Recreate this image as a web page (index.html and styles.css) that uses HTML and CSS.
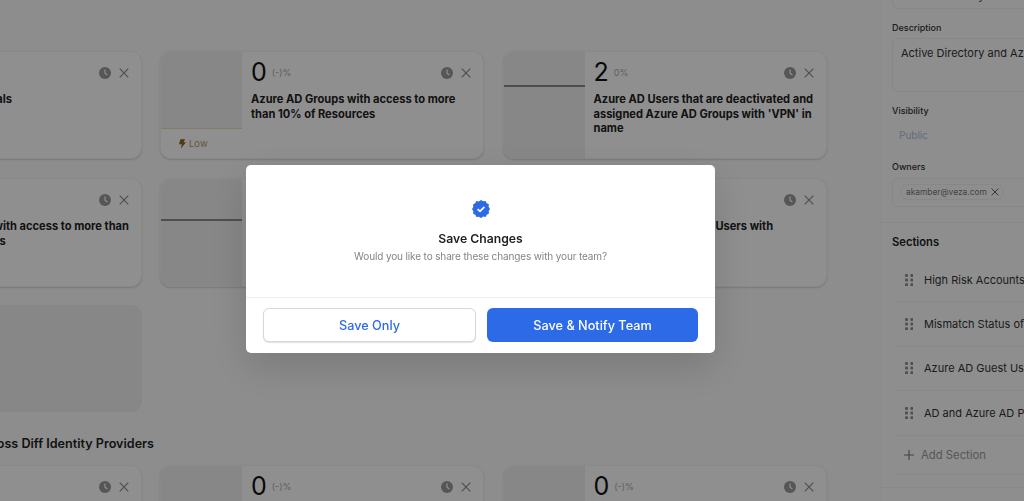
FILE: index.html
```html
<!DOCTYPE html>
<html lang="en">
<head>
<meta charset="utf-8">
<title>Save Changes</title>
<link rel="stylesheet" href="styles.css">
</head>
<body>
<svg class="defs" width="0" height="0" aria-hidden="true">
  <symbol id="clock" viewBox="0 0 12 12"><circle cx="6" cy="6" r="6" fill="currentColor"/><path d="M6 2.6V6.2L8.4 8" fill="none" stroke="#fff" stroke-width="1.2"/></symbol>
  <symbol id="close" viewBox="0 0 10 10"><path d="M.7.7 9.3 9.3M9.3.7.7 9.3" fill="none" stroke="currentColor" stroke-width="1.2"/></symbol>
  <symbol id="grip" viewBox="0 0 8 12"><g fill="currentColor"><rect width="3" height="3" rx="1"/><rect x="5.4" width="3" height="3" rx="1"/><rect y="4.6" width="3" height="3" rx="1"/><rect x="5.4" y="4.6" width="3" height="3" rx="1"/><rect y="9.2" width="3" height="3" rx="1"/><rect x="5.4" y="9.2" width="3" height="3" rx="1"/></g></symbol>
</svg>
<div class="page">
  <main class="board">
    <div class="cards row-a">
      <article class="card"><div class="chart"></div><div class="body"><div class="head"><span class="num">1</span><span class="tools"><svg class="clock"><use href="#clock"/></svg><svg class="close"><use href="#close"/></svg></span></div><h3>Shared Credentials</h3></div></article>
      <article class="card"><div class="chart chart-low"><div class="plot"></div><div class="level"><svg class="bolt" viewBox="0 0 8 11"><path d="M1.6 0H7L5.3 3.6H8L2 11 3.2 5.8H0Z" fill="currentColor"/></svg>Low</div></div><div class="body"><div class="head"><span class="num">0</span><span class="pct">(-)%</span><span class="tools"><svg class="clock"><use href="#clock"/></svg><svg class="close"><use href="#close"/></svg></span></div><h3>Azure AD Groups with access to more than 10% of Resources</h3></div></article>
      <article class="card"><div class="chart chart-line line-a"></div><div class="body"><div class="head"><span class="num">2</span><span class="pct">0%</span><span class="tools"><svg class="clock"><use href="#clock"/></svg><svg class="close"><use href="#close"/></svg></span></div><h3>Azure AD Users that are deactivated and assigned Azure AD Groups with 'VPN' in name</h3></div></article>
    </div>
    <div class="cards row-b">
      <article class="card"><div class="chart"></div><div class="body"><div class="head"><span class="num">4</span><span class="tools"><svg class="clock"><use href="#clock"/></svg><svg class="close"><use href="#close"/></svg></span></div><h3>Azure AD Apps with access to more than 10% of Resources</h3></div></article>
      <article class="card"><div class="chart chart-line line-b"></div><div class="body"></div></article>
      <article class="card"><div class="chart"></div><div class="body"><div class="head"><span class="num">0</span><span class="tools"><svg class="clock"><use href="#clock"/></svg><svg class="close"><use href="#close"/></svg></span></div><h3>Azure AD Deactivated Users with</h3></div></article>
    </div>
    <div class="cards row-c">
      <div class="placeholder"></div>
    </div>
    <div class="section-wrap"><h2 class="section-title">Mismatch Status of Users Across Diff Identity Providers</h2></div>
    <div class="cards row-d">
      <article class="card"><div class="chart"></div><div class="body"><div class="head"><span class="num">0</span><span class="tools"><svg class="clock"><use href="#clock"/></svg><svg class="close"><use href="#close"/></svg></span></div></div></article>
      <article class="card"><div class="chart"></div><div class="body"><div class="head"><span class="num">0</span><span class="pct">(-)%</span><span class="tools"><svg class="clock"><use href="#clock"/></svg><svg class="close"><use href="#close"/></svg></span></div></div></article>
      <article class="card"><div class="chart"></div><div class="body"><div class="head"><span class="num">0</span><span class="pct">(-)%</span><span class="tools"><svg class="clock"><use href="#clock"/></svg><svg class="close"><use href="#close"/></svg></span></div></div></article>
    </div>
  </main>

  <aside class="side">
    <div class="fields">
      <div class="box box-name">Active Directory and Azure AD</div>
      <div class="label">Description</div>
      <div class="box box-desc">Active Directory and Azure AD</div>
      <div class="label label-vis">Visibility</div>
      <div class="public">Public</div>
      <div class="label label-own">Owners</div>
      <div class="box box-owners"><span class="chip">akamber@veza.com<svg class="chip-x"><use href="#close"/></svg></span></div>
    </div>
    <section class="sections">
      <h2>Sections</h2>
      <div class="row"><svg class="grip"><use href="#grip"/></svg>High Risk Accounts and Groups</div>
      <div class="row"><svg class="grip"><use href="#grip"/></svg>Mismatch Status of Users Across</div>
      <div class="row"><svg class="grip"><use href="#grip"/></svg>Azure AD Guest Users and Groups</div>
      <div class="row"><svg class="grip"><use href="#grip"/></svg>AD and Azure AD Permissions</div>
      <div class="add"><svg class="plus" viewBox="0 0 10 10"><path d="M5 0V10M0 5H10" fill="none" stroke="currentColor" stroke-width="1.1"/></svg>Add Section</div>
    </section>
  </aside>
</div>

<div class="overlay">
  <div class="modal" role="dialog">
    <div class="modal-top">
      <svg class="badge" viewBox="0 0 18 18"><path d="M9 0l2.1 1.3 2.5-.3 1.1 2.2 2.2 1.1-.3 2.5L18 9l-1.3 2.1.3 2.5-2.2 1.1-1.1 2.2-2.5-.3L9 18l-2.1-1.3-2.5.3-1.1-2.2-2.2-1.1.3-2.5L0 9l1.3-2.1-.3-2.5 2.2-1.1L4.3 1.1l2.5.3z" fill="#2d6ae8"/><path d="M5.6 9.2 8 11.4 12.4 6.8" fill="none" stroke="#fff" stroke-width="1.7"/></svg>
      <h1>Save Changes</h1>
      <p>Would you like to share these changes with your team?</p>
    </div>
    <div class="modal-actions">
      <button class="btn btn-plain">Save Only</button>
      <button class="btn btn-primary">Save &amp; Notify Team</button>
    </div>
  </div>
</div>
</body>
</html>
```
FILE: styles.css
```css
* { box-sizing: border-box; }
html, body { margin: 0; height: 100%; overflow: hidden; }
body { font-family: Inter, "Liberation Sans", sans-serif; background: #fcfcfc; color: #1c1c22; }
.defs { display: block; }
.page { display: flex; height: 501px; overflow: hidden; }

.board { width: 880px; flex: none; overflow: hidden; padding-top: 51px; }
.cards { display: grid; grid-template-columns: repeat(3, 324px); column-gap: 18.5px; margin-left: -182.5px; }
.row-a { height: 108px; margin-bottom: 19px; }
.row-b { height: 109px; margin-bottom: 18px; }
.row-c { height: 107px; }
.row-d { height: 108px; }
.card { display: flex; overflow: hidden; background: #fff; border: 1px solid #f4f4f5; border-radius: 11px; box-shadow: 0 1px 2px rgba(0,0,0,.16); }
.chart { width: 81px; flex: none; background: #f0f0f2; display: flex; flex-direction: column; }
.chart-line::before { content: ""; height: 2px; background: #8c8c90; }
.line-a { padding-top: 33px; }
.line-b { padding-top: 40px; }
.plot { height: 77px; flex: none; background: #f0f0f2; border-bottom: 1px solid #e8dcb8; }
.chart-low { background: #fff; }
.level { display: flex; align-items: center; gap: 3px; padding: 9px 0 0 18px; font-size: 9.5px; color: #b89c5e; }
.bolt { width: 7px; height: 10px; color: #8a6a1c; }
.body { flex: 1; min-width: 0; padding: 6px 10px 0 9px; }
.head { display: flex; align-items: center; height: 29px; }
.num { font-size: 25px; line-height: 29px; font-weight: 400; color: #111; }
.pct { margin-left: 5px; font-size: 9px; color: #a8a8a8; }
.tools { margin-left: auto; margin-right: 2px; display: flex; align-items: center; gap: 8px; color: #9a9a9e; }
.clock { width: 12px; height: 12px; }
.close { width: 10px; height: 10px; color: #8e8e92; }
h3 { margin: 5px 0 0; font-size: 11.1px; line-height: 14.7px; font-weight: 650; color: #222; }

.placeholder { background: #f0f0f2; border-radius: 11px; }
.section-wrap { display: flex; justify-content: flex-end; width: 154px; margin: 23px 0 12px; }
.section-title { margin: 0; flex: none; font-size: 12.6px; line-height: 18px; font-weight: 600; color: #222; white-space: nowrap; }

.side { flex: 1; min-width: 0; overflow: hidden; background: #fdfdfd; border-left: 1px solid #f8f8f8; }
.fields { width: 400px; padding: 0 0 15px 11px; margin-top: -20px; }
.box { border: 1px solid #f0f0f2; border-radius: 6px; font-size: 11px; color: #333; padding-left: 8px; }
.box-name { height: 29px; line-height: 18px; padding-top: 6px; white-space: nowrap; }
.label { margin-top: 12px; font-size: 9px; line-height: 14px; font-weight: 500; color: #333; }
.box-desc { height: 54px; margin-top: 3px; padding-top: 6px; line-height: 16px; }
.label-vis { margin-top: 12px; }
.public { margin: 10px 0 0 7px; font-size: 10px; line-height: 14px; color: #b3bde8; }
.label-own { margin-top: 18px; }
.box-owners { height: 29px; margin-top: 4px; padding: 5px 0 0 7px; }
.chip { display: inline-flex; align-items: center; gap: 4px; height: 16px; padding: 0 4px 0 5px; border: 1px solid #f0f0f2; border-radius: 8px; font-size: 8.4px; color: #777; }
.chip-x { width: 8px; height: 8px; color: #555; }

.sections { border-top: 1px solid #f3f3f3; border-bottom: 1px solid #f3f3f3; padding: 11px 0 12px 11px; }
.sections h2 { margin: 0 0 8px; font-size: 11.2px; line-height: 16px; font-weight: 600; color: #222; }
.row { display: flex; align-items: center; gap: 11px; width: 400px; height: 44.4px; padding-left: 12px; margin-left: 1px; border-bottom: 1px dotted #eeeeee; font-size: 11px; color: #333; white-space: nowrap; }
.grip { width: 8px; height: 12px; flex: none; color: #8f8f93; }
.add { display: flex; align-items: center; gap: 7px; height: 39px; padding-left: 11px; border-bottom: 1px dotted #eeeeee; margin-left: 1px; width: 400px; font-size: 11.3px; color: #9a9a9e; }
.plus { width: 10px; height: 10px; color: #777; }

.overlay { position: fixed; inset: 0; display: flex; align-items: flex-start; padding: 165px 0 0 246px; background: rgba(0,0,0,.44); backdrop-filter: blur(.6px); }
.modal { width: 469px; height: 188px; background: #fff; border-radius: 5px; box-shadow: 0 14px 40px rgba(0,0,0,.15); display: flex; flex-direction: column; }
.modal-top { height: 133px; flex: none; border-bottom: 1px solid #eeeeee; display: flex; flex-direction: column; align-items: center; padding-top: 35px; }
.badge { width: 18px; height: 18px; }
.modal-top h1 { margin: 13px 0 0; font-size: 12.2px; line-height: 16px; font-weight: 600; color: #1f1f24; }
.modal-top p { margin: 2px 0 0; font-size: 10px; letter-spacing: -.13px; line-height: 14px; color: #85858a; }
.modal-actions { display: flex; gap: 11px; padding: 10px 17px; }
.btn { flex: 1; height: 34px; padding: 0; border-radius: 6px; font-family: inherit; font-size: 12.7px; font-weight: 500; }
.btn-plain { background: #fff; border: 1px solid #d8d8dc; box-shadow: 0 1px 1px rgba(0,0,0,.12); color: #2d6ae8; }
.btn-primary { background: #2d6ae8; border: none; color: #fff; }
```
